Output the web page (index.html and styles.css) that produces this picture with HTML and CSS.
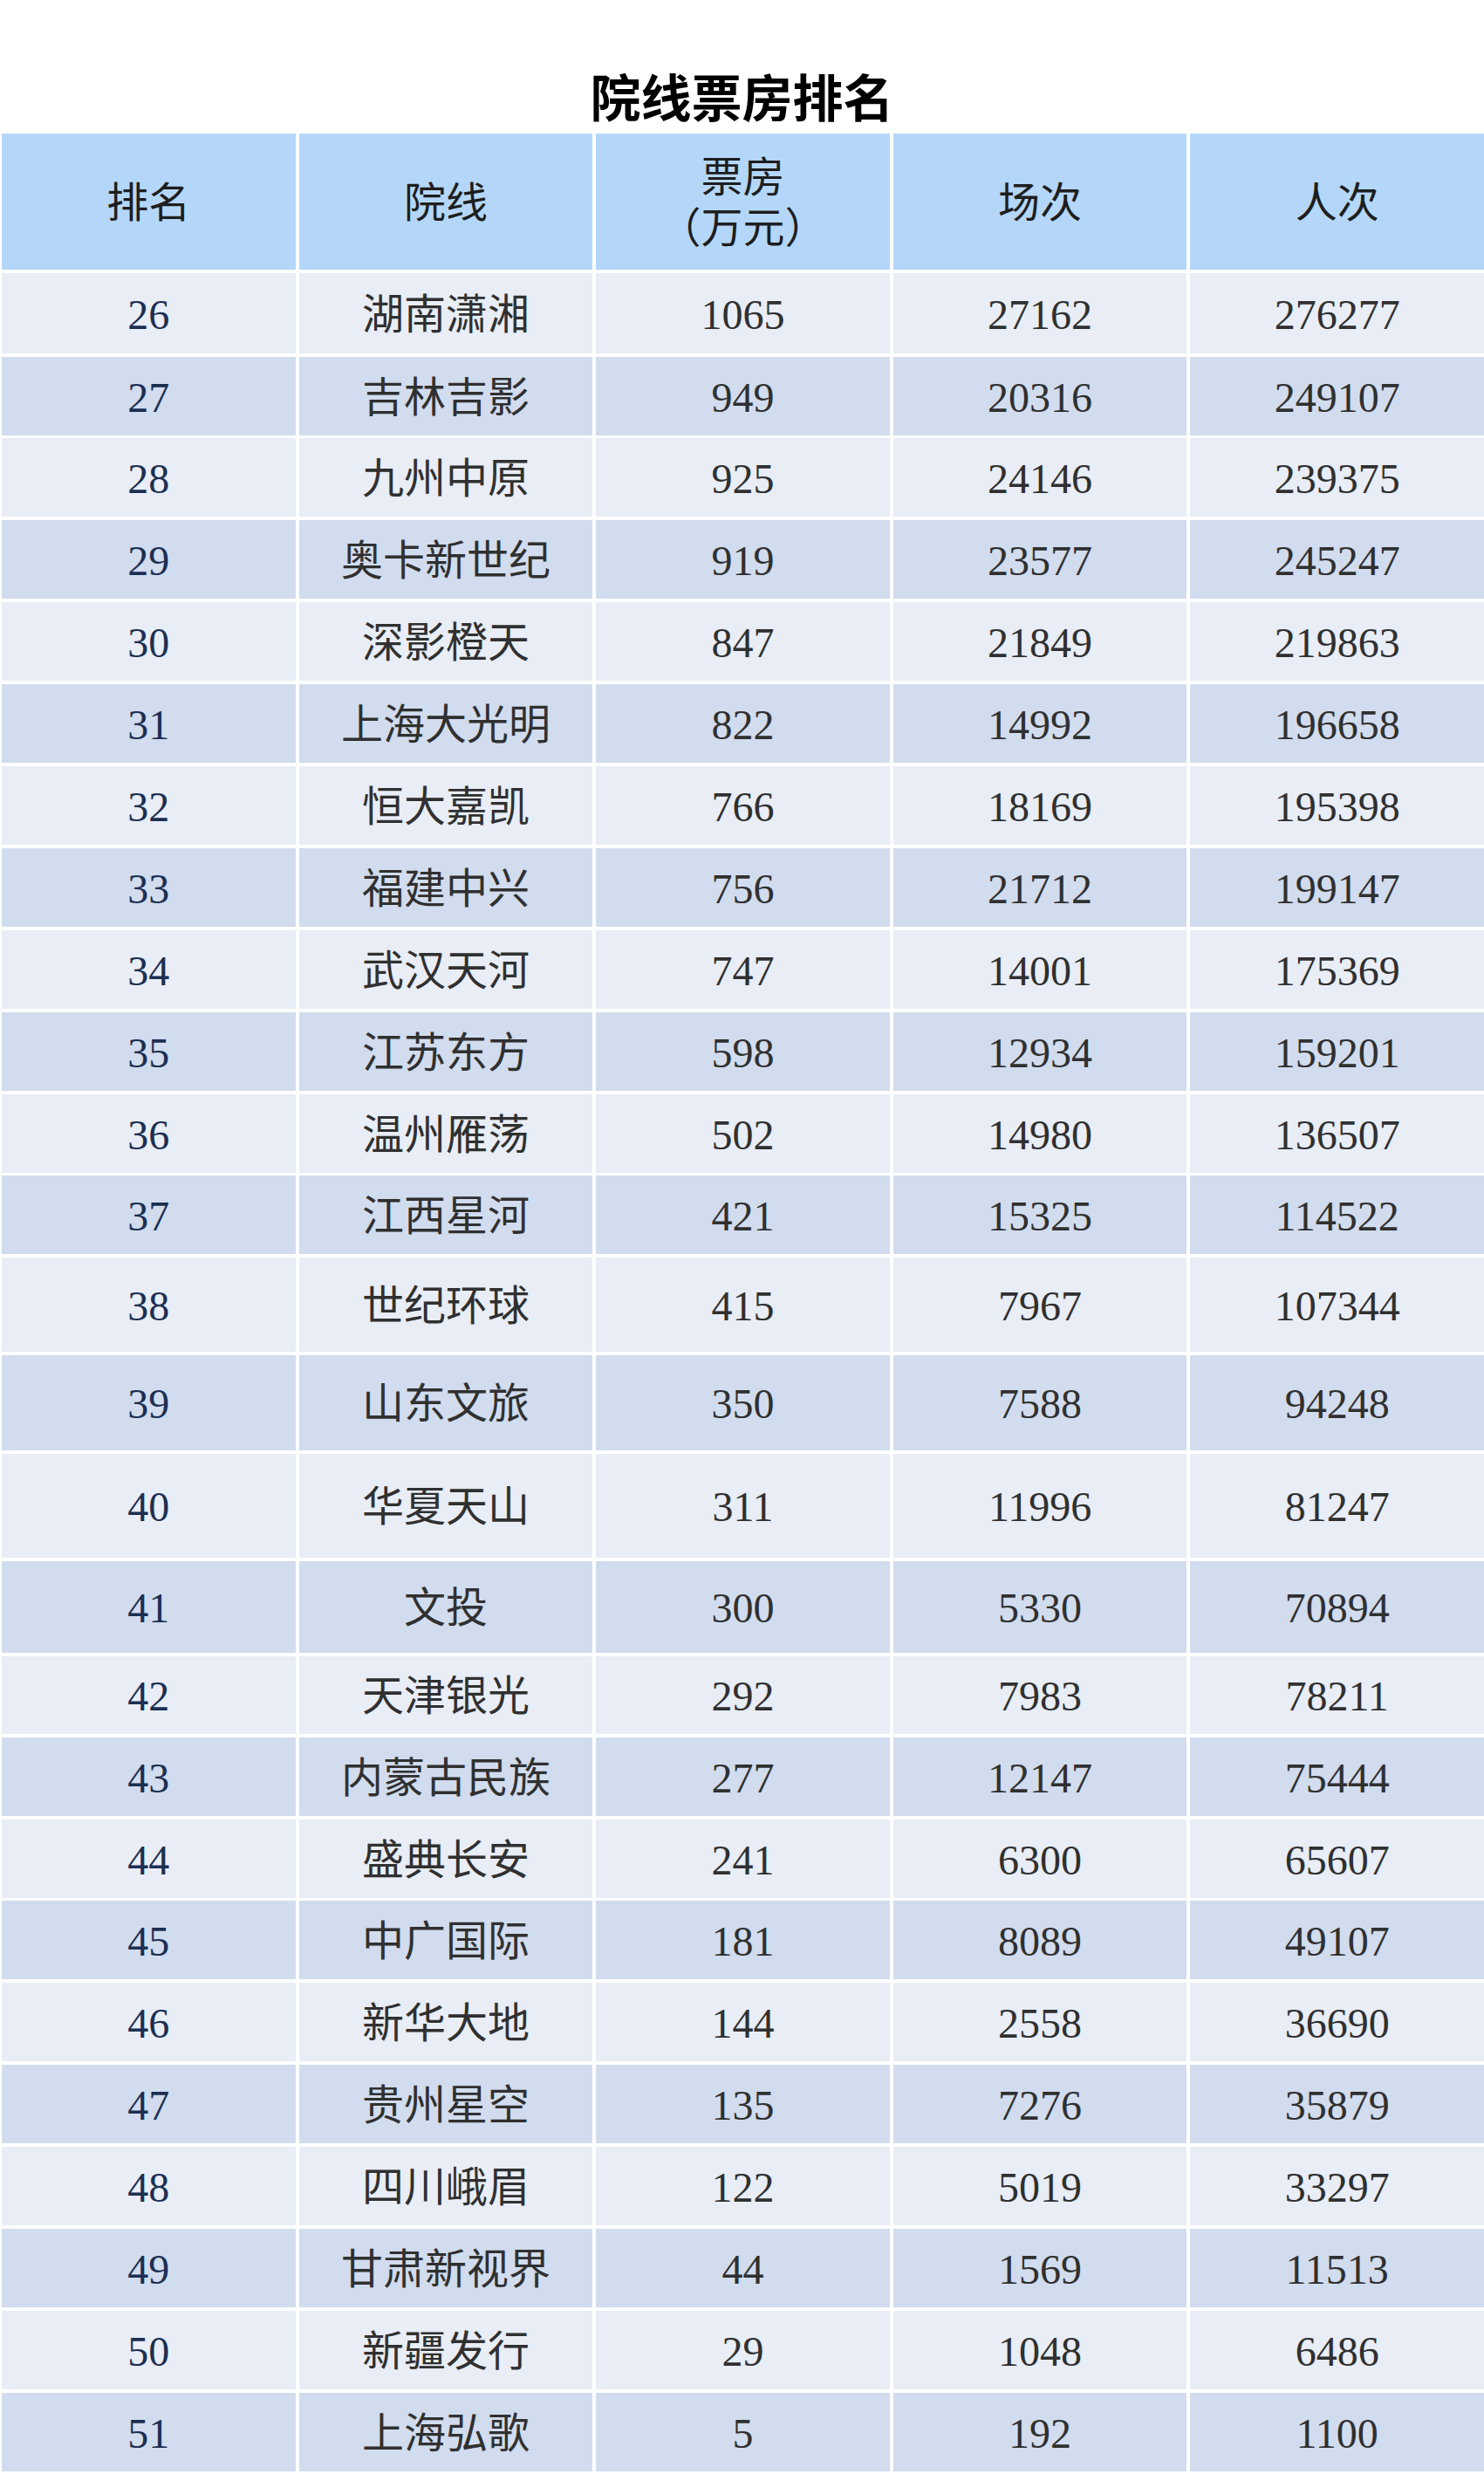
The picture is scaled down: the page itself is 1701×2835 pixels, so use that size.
FILE: index.html
```html
<!DOCTYPE html>
<html lang="zh-CN">
<head>
<meta charset="utf-8">
<title>院线票房排名</title>
<link rel="stylesheet" href="styles.css">
</head>
<body>
<div class="page">
  <h1 class="title">院线票房排名</h1>
  <div class="table">
    <div class="row head">
      <div class="cell">排名</div>
      <div class="cell">院线</div>
      <div class="cell">票房<br>（万元）</div>
      <div class="cell">场次</div>
      <div class="cell">人次</div>
    </div>
    <div class="row light h92"><div class="cell rank">26</div><div class="cell">湖南潇湘</div><div class="cell">1065</div><div class="cell">27162</div><div class="cell">276277</div></div>
    <div class="row dark"><div class="cell rank">27</div><div class="cell">吉林吉影</div><div class="cell">949</div><div class="cell">20316</div><div class="cell">249107</div></div>
    <div class="row light"><div class="cell rank">28</div><div class="cell">九州中原</div><div class="cell">925</div><div class="cell">24146</div><div class="cell">239375</div></div>
    <div class="row dark"><div class="cell rank">29</div><div class="cell">奥卡新世纪</div><div class="cell">919</div><div class="cell">23577</div><div class="cell">245247</div></div>
    <div class="row light"><div class="cell rank">30</div><div class="cell">深影橙天</div><div class="cell">847</div><div class="cell">21849</div><div class="cell">219863</div></div>
    <div class="row dark"><div class="cell rank">31</div><div class="cell">上海大光明</div><div class="cell">822</div><div class="cell">14992</div><div class="cell">196658</div></div>
    <div class="row light"><div class="cell rank">32</div><div class="cell">恒大嘉凯</div><div class="cell">766</div><div class="cell">18169</div><div class="cell">195398</div></div>
    <div class="row dark"><div class="cell rank">33</div><div class="cell">福建中兴</div><div class="cell">756</div><div class="cell">21712</div><div class="cell">199147</div></div>
    <div class="row light"><div class="cell rank">34</div><div class="cell">武汉天河</div><div class="cell">747</div><div class="cell">14001</div><div class="cell">175369</div></div>
    <div class="row dark"><div class="cell rank">35</div><div class="cell">江苏东方</div><div class="cell">598</div><div class="cell">12934</div><div class="cell">159201</div></div>
    <div class="row light"><div class="cell rank">36</div><div class="cell">温州雁荡</div><div class="cell">502</div><div class="cell">14980</div><div class="cell">136507</div></div>
    <div class="row dark"><div class="cell rank">37</div><div class="cell">江西星河</div><div class="cell">421</div><div class="cell">15325</div><div class="cell">114522</div></div>
    <div class="row light h108"><div class="cell rank">38</div><div class="cell">世纪环球</div><div class="cell">415</div><div class="cell">7967</div><div class="cell">107344</div></div>
    <div class="row dark h109"><div class="cell rank">39</div><div class="cell">山东文旅</div><div class="cell">350</div><div class="cell">7588</div><div class="cell">94248</div></div>
    <div class="row light h119"><div class="cell rank">40</div><div class="cell">华夏天山</div><div class="cell">311</div><div class="cell">11996</div><div class="cell">81247</div></div>
    <div class="row dark h105"><div class="cell rank">41</div><div class="cell">文投</div><div class="cell">300</div><div class="cell">5330</div><div class="cell">70894</div></div>
    <div class="row light h89"><div class="cell rank">42</div><div class="cell">天津银光</div><div class="cell">292</div><div class="cell">7983</div><div class="cell">78211</div></div>
    <div class="row dark"><div class="cell rank">43</div><div class="cell">内蒙古民族</div><div class="cell">277</div><div class="cell">12147</div><div class="cell">75444</div></div>
    <div class="row light"><div class="cell rank">44</div><div class="cell">盛典长安</div><div class="cell">241</div><div class="cell">6300</div><div class="cell">65607</div></div>
    <div class="row dark"><div class="cell rank">45</div><div class="cell">中广国际</div><div class="cell">181</div><div class="cell">8089</div><div class="cell">49107</div></div>
    <div class="row light"><div class="cell rank">46</div><div class="cell">新华大地</div><div class="cell">144</div><div class="cell">2558</div><div class="cell">36690</div></div>
    <div class="row dark"><div class="cell rank">47</div><div class="cell">贵州星空</div><div class="cell">135</div><div class="cell">7276</div><div class="cell">35879</div></div>
    <div class="row light"><div class="cell rank">48</div><div class="cell">四川峨眉</div><div class="cell">122</div><div class="cell">5019</div><div class="cell">33297</div></div>
    <div class="row dark"><div class="cell rank">49</div><div class="cell">甘肃新视界</div><div class="cell">44</div><div class="cell">1569</div><div class="cell">11513</div></div>
    <div class="row light"><div class="cell rank">50</div><div class="cell">新疆发行</div><div class="cell">29</div><div class="cell">1048</div><div class="cell">6486</div></div>
    <div class="row dark"><div class="cell rank">51</div><div class="cell">上海弘歌</div><div class="cell">5</div><div class="cell">192</div><div class="cell">1100</div></div>
  </div>
</div>
</body>
</html>
```

FILE: styles.css
```css
html, body {
  margin: 0;
  padding: 0;
  background: #ffffff;
}

.page {
  width: 1701px;
  height: 2835px;
  overflow: hidden;
}

.title {
  margin: 0;
  padding: 74px 0 8.7px;
  height: 70px;
  line-height: 70px;
  text-align: center;
  font-family: "Noto Sans CJK SC", "Liberation Sans", sans-serif;
  font-weight: 700;
  font-size: 58px;
  color: #000000;
}

.table {
  display: flex;
  flex-direction: column;
  gap: 3.9px;
  padding-left: 2px;
}

.row {
  display: grid;
  grid-template-columns: repeat(5, 1fr);
  column-gap: 4px;
  height: 90px;
}

.cell {
  display: flex;
  align-items: center;
  justify-content: center;
  padding-top: 4px;
  box-sizing: border-box;
  text-align: center;
  font-family: "Liberation Serif", "Noto Sans CJK SC", serif;
  font-weight: 400;
  font-size: 48px;
  line-height: 58px;
  color: #303030;
}

.head {
  height: 156.3px;
}

.head .cell {
  background: #b4d7f9;
  color: #1e1e1e;
}

.light .cell {
  background: #e8edf6;
}

.dark .cell {
  background: #d1dcee;
}

.rank {
  color: #1c2f52 !important;
}

.h92 { height: 91.8px; }
.h108 { height: 107.6px; }
.h109 { height: 109px; }
.h119 { height: 119px; }
.h105 { height: 105px; }
.h89 { height: 89.3px; }
```
